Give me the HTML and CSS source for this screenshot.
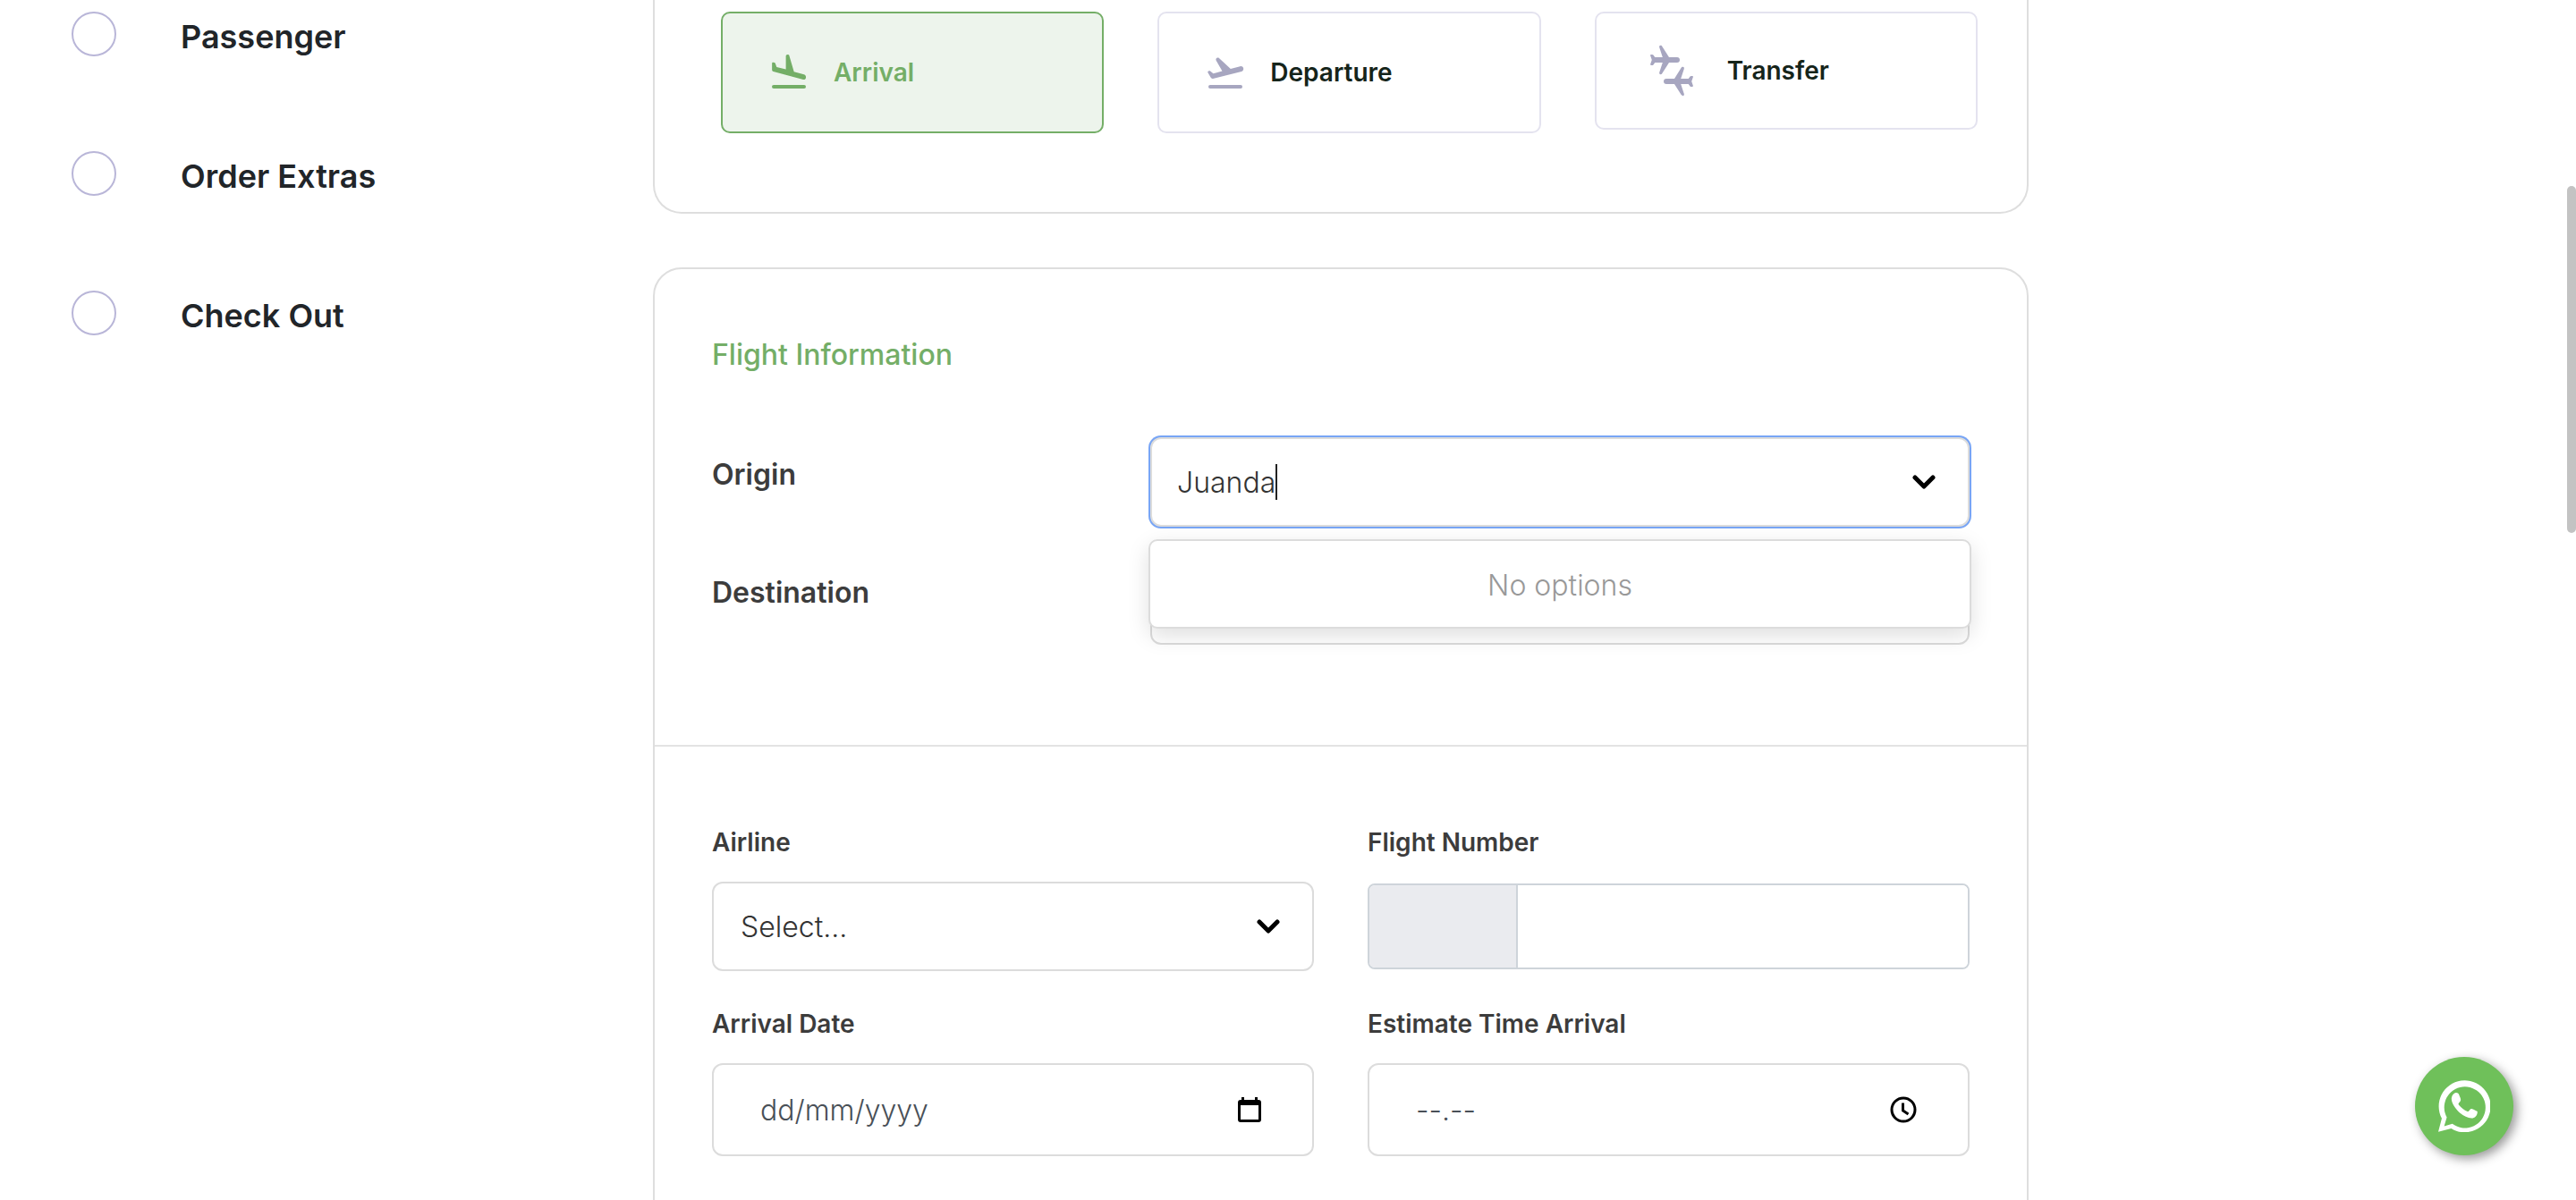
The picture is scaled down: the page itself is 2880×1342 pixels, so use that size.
FILE: index.html
```html
<!DOCTYPE html>
<html lang="en">
<head>
<meta charset="utf-8">
<meta name="viewport" content="width=device-width, initial-scale=1">
<title>Flight Information</title>
<link rel="stylesheet" href="styles.css">
</head>
<body>
<div class="page">
  <nav class="steps" aria-label="Booking steps">
    <ol class="step-list">
      <li class="step"><span class="step-dot"></span><span class="step-name">Passenger</span></li>
      <li class="step"><span class="step-dot"></span><span class="step-name">Order Extras</span></li>
      <li class="step"><span class="step-dot"></span><span class="step-name">Check Out</span></li>
    </ol>
  </nav>

  <main class="content">
    <section class="card card-types" aria-label="Service type">
      <button type="button" class="type type-active" aria-pressed="true">
        <svg class="type-icon" viewBox="0 0 24 24" aria-hidden="true"><rect x="2.5" y="19" width="19" height="2" rx="1"/><path d="M20 16c.8.21 1.3-.26 1.5-1.06.21-.8-.26-1.62-1.06-1.84l-5.6-1.5-2.6-8.9c-.1-.4-.3-.55-.65-.65-.67-.18-1.28.2-1.28.9v7.35L5.15 8.95l-.73-1.92c-.1-.3-.3-.45-.6-.53l-.5-.1c-.5-.1-.75.15-.75.6v3.5c0 .45.3.85.75.97z"/></svg>
        <span>Arrival</span>
      </button>
      <button type="button" class="type" aria-pressed="false">
        <svg class="type-icon" viewBox="0 0 24 24" aria-hidden="true"><rect x="2.5" y="19" width="19" height="2" rx="1"/><path d="M22.07 9.64c-.21-.8-1.04-1.28-1.84-1.06L14.92 10 8.46 3.98c-.3-.27-.6-.3-.95-.2-.7.2-1.02.95-.65 1.6l3.37 5.87-4.97 1.33-1.57-1.24c-.25-.2-.5-.25-.8-.17l-.3.08c-.4.1-.55.5-.35.85l1.6 2.83c.25.45.7.65 1.2.52L21 11.49c.81-.23 1.28-1.05 1.07-1.85z"/></svg>
        <span>Departure</span>
      </button>
      <button type="button" class="type type-compact" aria-pressed="false">
        <svg class="type-icon-large" viewBox="0 0 24 24" aria-hidden="true"><path d="M15.4 17l1.2 3.7c.1.4-.1.7-.45.7-.3 0-.45-.15-.6-.4L13 17h-3c-.6 0-1-.4-1-1s.4-1 1-1h3l2.5-4c.15-.25.35-.4.65-.4.35 0 .55.3.45.7L15.4 15h2.85l.6-.8c.1-.15.25-.2.4-.2h.4c.25 0 .35.15.3.4L19.4 16l.55 1.6c.05.25-.05.4-.3.4h-.4c-.15 0-.3-.05-.4-.2l-.6-.8zM5.75 7l-.6-.8c-.1-.15-.25-.2-.4-.2h-.4c-.25 0-.35.15-.3.4L4.6 8l-.55 1.6c-.05.25.05.4.3.4h.4c.15 0 .3-.05.4-.2l.6-.8H8.6l-1.2 3.7c-.1.4.1.7.45.7.3 0 .45-.15.6-.4L11 9h3c.6 0 1-.4 1-1s-.4-1-1-1h-3L8.45 3c-.15-.25-.3-.4-.6-.4-.35 0-.55.3-.45.7L8.6 7z"/></svg>
        <span>Transfer</span>
      </button>
    </section>

    <form class="card card-flight">
      <section class="route">
        <h2 class="section-title">Flight Information</h2>
        <div class="route-row">
          <label class="route-label" for="origin">Origin</label>
          <div class="combo">
            <div class="control control-focus">
              <input class="combo-input" id="origin" type="text" role="combobox" aria-expanded="true" aria-controls="origin-menu" size="6" value="Juanda">
              <span class="caret"></span>
              <svg class="chevron" viewBox="0 0 26 16" aria-hidden="true"><path d="M3 3l10 10L23 3"/></svg>
            </div>
            <div class="menu" id="origin-menu">No options</div>
          </div>
        </div>
        <div class="route-row">
          <label class="route-label" for="destination">Destination</label>
          <div class="combo">
            <div class="control">
              <select class="select" id="destination"><option></option></select>
            </div>
          </div>
        </div>
      </section>

      <section class="details">
        <div class="group">
          <label class="label" for="airline">Airline</label>
          <div class="control">
            <select class="select" id="airline"><option>Select...</option></select>
            <svg class="chevron" viewBox="0 0 26 16" aria-hidden="true"><path d="M3 3l10 10L23 3"/></svg>
          </div>
        </div>
        <div class="group">
          <label class="label" for="flight-number">Flight Number</label>
          <div class="input-group">
            <span class="addon"></span>
            <input class="group-input" id="flight-number" type="text">
          </div>
        </div>
        <div class="group">
          <label class="label" for="arrival-date">Arrival Date</label>
          <div class="control control-picker">
            <input class="picker-input" id="arrival-date" type="text" placeholder="dd/mm/yyyy">
            <button type="button" class="picker-button" aria-label="Open calendar">
              <svg class="calendar" viewBox="0 0 26 28" aria-hidden="true"><path fill-rule="evenodd" d="M4 0h3v3h12V0h3v3h1a3 3 0 0 1 3 3v19a3 3 0 0 1-3 3H3a3 3 0 0 1-3-3V6a3 3 0 0 1 3-3h1zM3 9v16h20V9z"/></svg>
            </button>
          </div>
        </div>
        <div class="group">
          <label class="label" for="arrival-time">Estimate Time Arrival</label>
          <div class="control control-picker">
            <input class="picker-input" id="arrival-time" type="text" placeholder="--.--">
            <button type="button" class="picker-button" aria-label="Open time picker">
              <svg class="clock" viewBox="0 0 30 30" aria-hidden="true"><circle cx="15" cy="15" r="13"/><path d="M14.5 7.500v8.500l6 4"/></svg>
            </button>
          </div>
        </div>
      </section>
    </form>
  </main>
</div>

<a class="whatsapp" href="#whatsapp" aria-label="Chat on WhatsApp">
  <svg class="whatsapp-icon" viewBox="0 0 176 176" aria-hidden="true">
    <path fill-rule="evenodd" d="M0 175L12 130A88 88 0 1 1 44 164ZM20 156L48 148A70 70 0 1 0 29 126Z"/>
    <path d="M58 43C66 42 69 45 72 53C75 60 79 67 74 73C70 78 66 80 70 84C78 94 88 101 99 106C102 107 104 105 108 99C112 95 116 97 133 106C133 118 128 125 117 129C104 131 88 123 73 111C58 97 45 78 45 64C45 55 50 45 58 43Z"/>
  </svg>
</a>
<div class="scroll-thumb"></div>
</body>
</html>
```
FILE: styles.css
```css
*,
*::before,
*::after {
  box-sizing: border-box;
}

body {
  margin: 0;
  background: #fff;
  color: #212529;
  font-family: Inter, "Liberation Sans", sans-serif;
  font-size: 32px;
}

button,
input,
select {
  font: inherit;
  color: inherit;
}

.page {
  display: grid;
  grid-template-columns: 730fr 1538fr 612fr;
  height: 100vh;
  overflow: hidden;
}

/* Booking steps */
.steps {
  padding: 13px 0 0 80px;
}

.step-list {
  display: flex;
  flex-direction: column;
  gap: 106px;
  margin: 0;
  padding: 0;
  list-style: none;
}

.step {
  display: flex;
  align-items: center;
  gap: 72px;
}

.step-dot {
  width: 50px;
  height: 50px;
  border: 2px solid #b9b6d8;
  border-radius: 50%;
}

.step-name {
  padding-top: 6px;
  font-size: 36px;
  font-weight: 600;
  line-height: 44px;
}

/* Cards */
.card {
  border: 2px solid #dedede;
  border-radius: 32px;
}

.card-types {
  display: grid;
  grid-template-columns: repeat(3, 1fr);
  align-items: start;
  gap: 60px;
  margin-bottom: 60px;
  padding: 13px 55px 88px 74px;
  border-top: 0;
  border-radius: 0 0 32px 32px;
}

.type {
  display: flex;
  align-items: center;
  gap: 26px;
  height: 136px;
  padding: 0 50px;
  border: 2px solid #e4e3ef;
  border-radius: 10px;
  background: #fff;
  color: #15241a;
  font-size: 28px;
  font-weight: 600;
}

.type-compact {
  height: 132px;
  padding: 0 48px;
}

.type-active {
  border-color: #74ae67;
  background: #edf4ec;
  color: #74ae67;
}

.type-icon,
.type-icon-large {
  flex: none;
  width: 48px;
  height: 48px;
  fill: #a7a6c0;
}

.type-icon-large {
  width: 72px;
  height: 72px;
}

.type-active .type-icon {
  fill: #74ae67;
}

/* Origin and destination */
.route {
  display: flex;
  flex-direction: column;
  gap: 32px;
  padding: 74px 64px 112px;
  border-bottom: 2px solid #e3e3e3;
}

.section-title {
  margin: 0 0 38px;
  color: #74ae67;
  font-size: 32px;
  font-weight: 500;
  line-height: 44px;
}

.route-row {
  display: grid;
  grid-template-columns: 490fr 916fr;
  align-items: start;
}

.route-label {
  padding-top: 22px;
  color: #3c3c3c;
  font-weight: 600;
  line-height: 40px;
}

.combo {
  position: relative;
}

.control {
  display: flex;
  align-items: center;
  position: relative;
  height: 100px;
  border: 2px solid #dcdcdc;
  border-radius: 12px;
  background: #fff;
  color: #333;
  font-weight: 300;
}

.control-focus {
  padding: 0 36px 0 28px;
  box-shadow: 0 0 0 2px #78a5f5;
}

.combo-input {
  padding: 0;
  border: 0;
  outline: 0;
  background: none;
  caret-color: transparent;
  field-sizing: content;
}

.caret {
  width: 2px;
  height: 40px;
  background: #222;
}

.chevron {
  flex: none;
  width: 26px;
  height: 16px;
  margin-left: auto;
  fill: none;
  stroke: #000;
  stroke-width: 5;
  stroke-linecap: round;
  stroke-linejoin: round;
  pointer-events: none;
}

.select {
  flex: 1;
  height: 100%;
  padding: 0 30px;
  border: 0;
  border-radius: 10px;
  outline: 0;
  background: none;
  appearance: none;
}

.select + .chevron {
  margin-right: 36px;
}

.menu {
  position: absolute;
  z-index: 1;
  top: 114px;
  right: -2px;
  left: -2px;
  height: 100px;
  border: 2px solid #dcdcdc;
  border-radius: 10px;
  background: #fff;
  box-shadow: 0 8px 24px rgba(0, 0, 0, 0.13);
  color: #999;
  font-weight: 300;
  line-height: 100px;
  text-align: center;
}

/* Flight details */
.details {
  display: grid;
  grid-template-columns: 1fr 1fr;
  gap: 38px 60px;
  padding: 86px 64px;
}

.group {
  display: grid;
  grid-template-rows: 42px 1fr;
  align-items: center;
  gap: 23px;
}

.label {
  color: #3c3c3c;
  font-size: 28px;
  font-weight: 600;
  line-height: 42px;
}

.input-group {
  display: flex;
  height: 96px;
  overflow: hidden;
  border: 2px solid #ced4da;
  border-radius: 8px;
}

.addon {
  flex: 0 0 166px;
  border-right: 2px solid #ced4da;
  background: #eaebef;
}

.group-input {
  flex: 1;
  min-width: 0;
  padding: 0 24px;
  border: 0;
  outline: 0;
}

.control-picker {
  height: 104px;
  padding: 0 57px 0 52px;
}

.picker-input {
  flex: 1;
  min-width: 0;
  padding: 0;
  border: 0;
  outline: 0;
  background: none;
}

.picker-input::placeholder {
  color: #495057;
  opacity: 1;
}

.picker-button {
  display: flex;
  padding: 0;
  border: 0;
  background: none;
}

.calendar {
  width: 26px;
  height: 28px;
}

.clock {
  width: 30px;
  height: 30px;
  fill: none;
  stroke: #000;
  stroke-width: 3;
}

/* Floating items */
.whatsapp {
  display: grid;
  place-items: center;
  position: fixed;
  right: 70px;
  bottom: 50px;
  width: 110px;
  height: 110px;
  border-radius: 50%;
  background: #6fc05a;
  box-shadow: 4px 4px 12px #999;
}

.whatsapp-icon {
  width: 58px;
  height: 58px;
  fill: #fff;
}

.scroll-thumb {
  position: fixed;
  top: 208px;
  right: 0;
  width: 10px;
  height: 388px;
  border-radius: 5px;
  background: #c3c3c3;
}
```
